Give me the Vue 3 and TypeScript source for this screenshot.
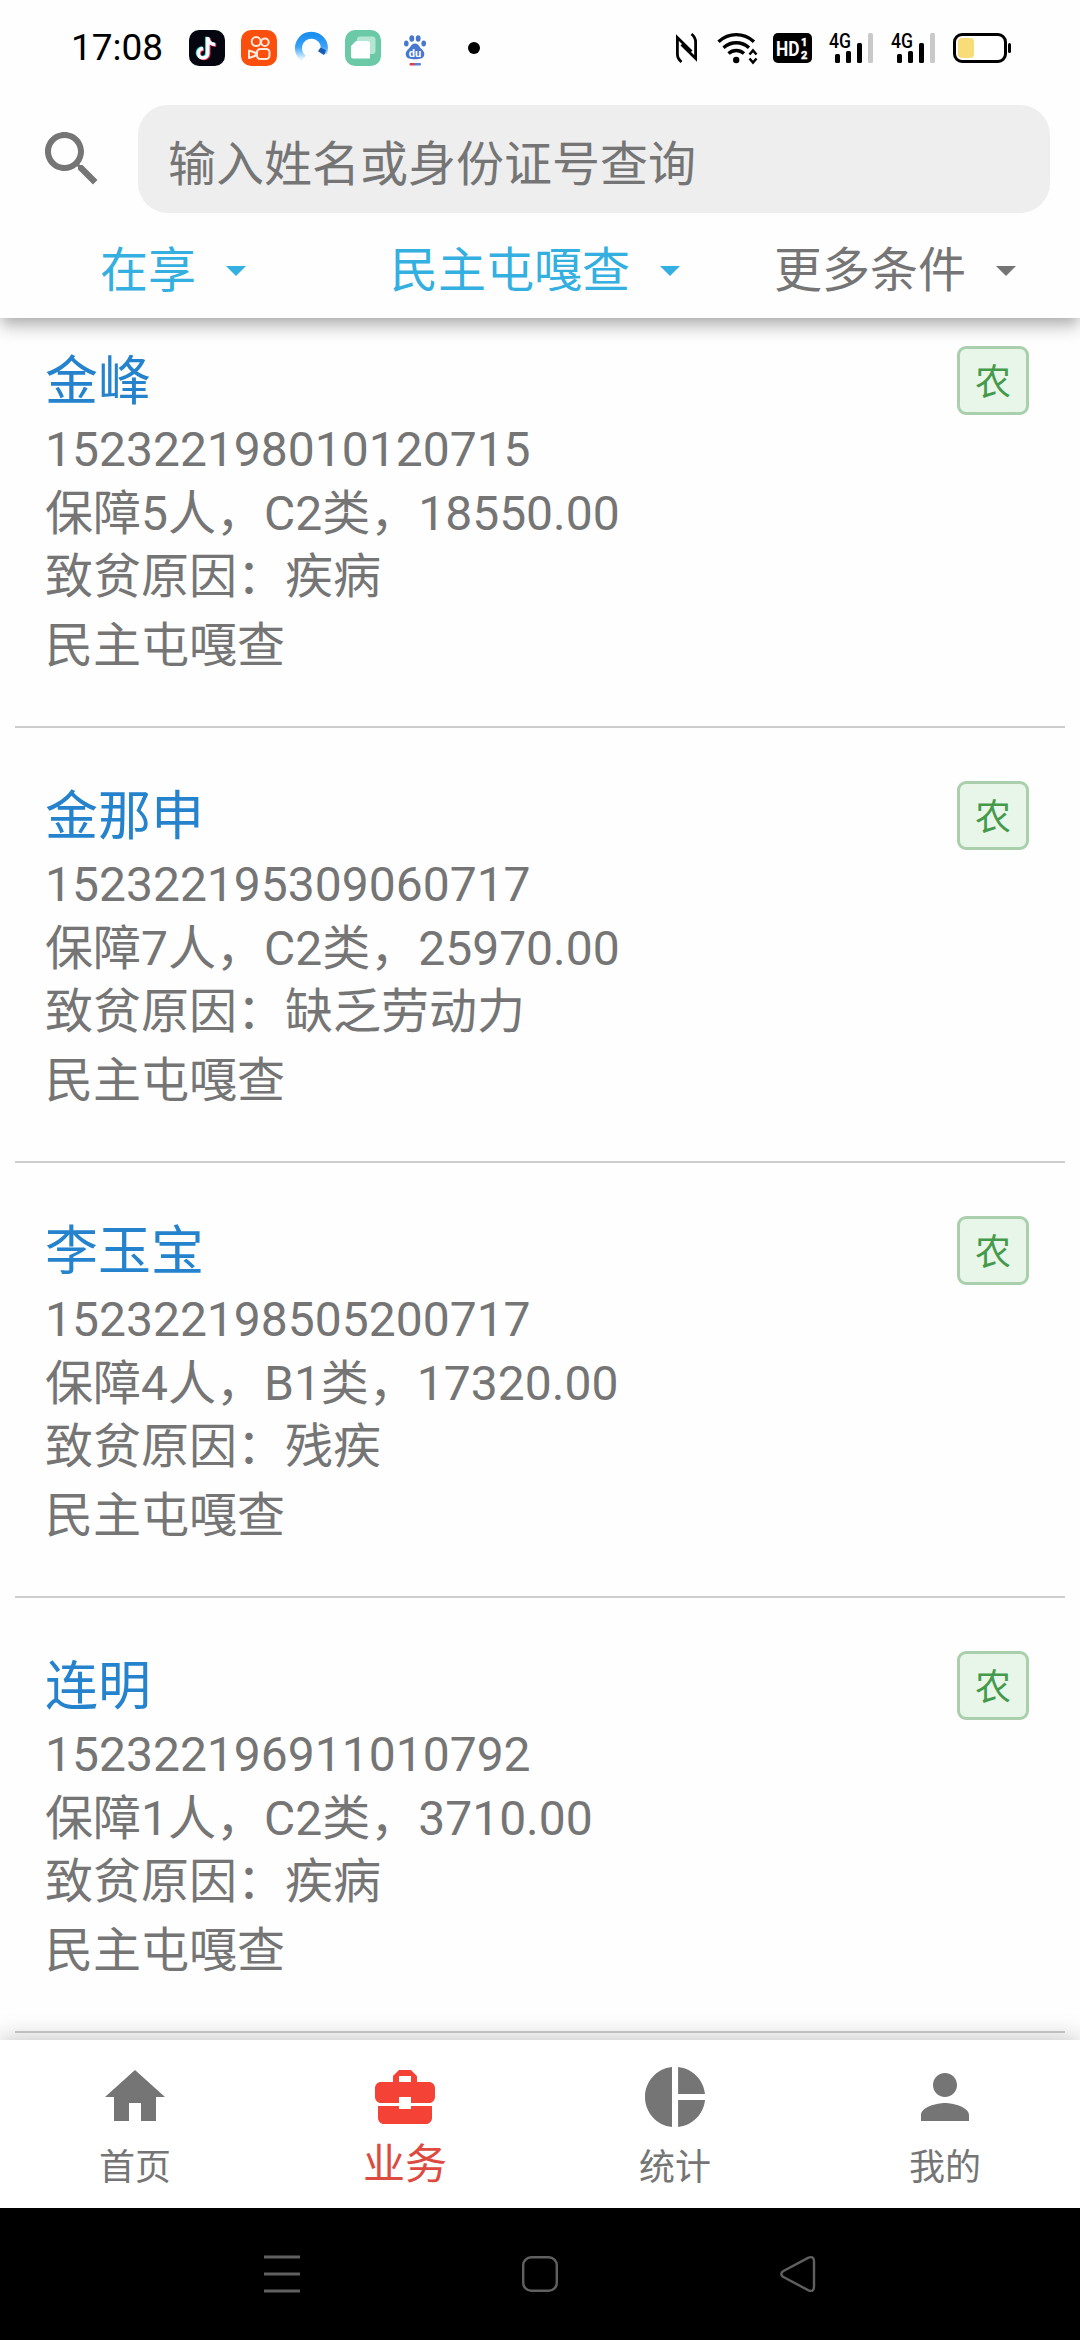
<script setup lang="ts">
import { ref } from 'vue'

interface Household {
  name: string
  idNumber: string
  people: number
  level: string
  amount: string
  reason: string
  village: string
  tag: string
}

interface Filter {
  key: string
  label: string
  active: boolean
}

interface Tab {
  key: string
  label: string
  path: string
}

const households: Household[] = [
  { name: '金峰', idNumber: '152322198010120715', people: 5, level: 'C2', amount: '18550.00', reason: '疾病', village: '民主屯嘎查', tag: '农' },
  { name: '金那申', idNumber: '152322195309060717', people: 7, level: 'C2', amount: '25970.00', reason: '缺乏劳动力', village: '民主屯嘎查', tag: '农' },
  { name: '李玉宝', idNumber: '152322198505200717', people: 4, level: 'B1', amount: '17320.00', reason: '残疾', village: '民主屯嘎查', tag: '农' },
  { name: '连明', idNumber: '152322196911010792', people: 1, level: 'C2', amount: '3710.00', reason: '疾病', village: '民主屯嘎查', tag: '农' },
]

const filters: Filter[] = [
  { key: 'state', label: '在享', active: true },
  { key: 'village', label: '民主屯嘎查', active: true },
  { key: 'more', label: '更多条件', active: false },
]

const tabs: Tab[] = [
  { key: 'home', label: '首页', path: 'M10 20v-6h4v6h5v-8h3L12 3 2 12h3v8z' },
  {
    key: 'work',
    label: '业务',
    path: 'M10 16v-1H3.01L3 19c0 1.11.89 2 2 2h14c1.11 0 2-.89 2-2v-4h-7v1h-4zm10-9h-4.01V5l-2-2h-4l-2 2v2H4c-1.1 0-2 .9-2 2v3c0 1.11.89 2 2 2h6v-2h4v2h6c1.1 0 2-.9 2-2V9c0-1.1-.9-2-2-2zm-6 0h-4V5h4v2z',
  },
  {
    key: 'stats',
    label: '统计',
    path: 'M11 2v20c-5.07-.5-9-4.79-9-10s3.93-9.5 9-10zm2.03 0v8.99H22c-.47-4.74-4.24-8.52-8.97-8.99zm0 11.01V22c4.74-.47 8.5-4.25 8.97-8.99h-8.97z',
  },
  {
    key: 'mine',
    label: '我的',
    path: 'M12 12c2.21 0 4-1.79 4-4s-1.79-4-4-4-4 1.79-4 4 1.79 4 4 4zm0 2c-2.67 0-8 1.34-8 4v2h16v-2c0-2.66-5.33-4-8-4z',
  },
]

const currentTab = ref('work')
const keyword = ref('')
</script>

<template>
  <div class="screen">
    <header class="top">
      <div class="status">
        <div class="status-left">
          <span class="clock">17:08</span>
          <svg class="app-icon" viewBox="0 0 36 36">
            <rect width="36" height="36" rx="10" fill="#05060f" />
            <g fill="none" stroke-width="3.4">
              <path d="M18.3 7v16.2a4.7 4.7 0 1 1-4.7-4.9M18.3 7.5c.6 4.2 3.4 6.6 7.4 6.8" stroke="#35e5e0" transform="translate(-.5 -.3)" />
              <path d="M18.3 7v16.2a4.7 4.7 0 1 1-4.7-4.9M18.3 7.5c.6 4.2 3.4 6.6 7.4 6.8" stroke="#f5315f" transform="translate(1.5 .9)" />
              <path d="M18.3 7v16.2a4.7 4.7 0 1 1-4.7-4.9M18.3 7.5c.6 4.2 3.4 6.6 7.4 6.8" stroke="#fff" transform="translate(.5 .2)" />
            </g>
          </svg>
          <svg class="app-icon" viewBox="0 0 36 36">
            <rect width="36" height="36" rx="10" fill="#fb4f0e" />
            <g fill="none" stroke="#ffeadd" stroke-width="2">
              <circle cx="15.2" cy="11.6" r="4.5" />
              <circle cx="23.9" cy="12.2" r="3.8" />
              <rect x="16" y="19" width="12.5" height="10" rx="3.2" />
              <path d="M8 20.5v7.5l6.5-2.3v-3z" stroke-linejoin="round" />
            </g>
          </svg>
          <svg class="app-icon" viewBox="0 0 36 36">
            <defs>
              <linearGradient id="ring" x1="0" y1="0" x2="0" y2="1">
                <stop offset="0" stop-color="#1a8ff0" />
                <stop offset=".5" stop-color="#3aa3f5" />
                <stop offset="1" stop-color="#e4f3fe" />
              </linearGradient>
            </defs>
            <path d="M10.5 28.5A13 13 0 1 1 30.5 23" fill="none" stroke="url(#ring)" stroke-width="7" />
            <path d="M27.5 17.5l5.3 2.5c-.2 2-.8 3.6-1.9 5.1l-5.9-3.9z" fill="#175bb5" />
          </svg>
          <svg class="app-icon" viewBox="0 0 36 36">
            <rect width="36" height="36" rx="10" fill="#6cc9a8" />
            <rect x="12" y="6.5" width="18.5" height="17.5" rx="3" fill="#b4e6d4" />
            <path d="M11 11h11a3 3 0 0 1 3 3v14.5H8.5A2.5 2.5 0 0 1 6 26V16z" fill="#fff" />
          </svg>
          <svg class="app-icon" viewBox="0 0 36 36">
            <g fill="#4777cf">
              <ellipse cx="9.3" cy="13.5" rx="2.3" ry="3" />
              <ellipse cx="14.8" cy="8.5" rx="2.4" ry="3.3" />
              <ellipse cx="21.2" cy="8.5" rx="2.4" ry="3.3" />
              <ellipse cx="26.7" cy="13.5" rx="2.3" ry="3" />
              <path d="M18 13.5c-3.5 0-4.3 3.5-6.3 5.3-2.6 2.3-3.6 4.4-2.7 7 1 3 4.5 3.4 9 3.4s8-.4 9-3.4c.9-2.6-.1-4.7-2.7-7-2-1.8-2.8-5.3-6.3-5.3z" />
            </g>
            <text x="18" y="27" class="du" text-anchor="middle">du</text>
            <rect x="12.5" y="33" width="6" height="2.5" rx="1" fill="#dc3f4c" />
            <rect x="17.5" y="33" width="6.5" height="2.5" rx="1" fill="#5b83d8" />
          </svg>
          <span class="more-dot"></span>
        </div>
        <div class="status-right">
          <svg width="21" height="30" viewBox="0 0 21 30" fill="none" stroke="#000" stroke-width="2.8">
            <path d="M5.5 29C2.5 26.5 1.4 24 1.4 21V4.5L15.5 18.5M15.5 1C18.5 3.5 19.6 6 19.6 9V25.5L5.5 11.5" />
          </svg>
          <svg class="wifi" width="42" height="32" viewBox="0 0 42 32">
            <g fill="none" stroke="#000" stroke-width="3.4">
              <path d="M1.5 9.7C12 .3 26.5.3 37 9.7" />
              <path d="M6.5 15.7C14 9 24.5 9 32 15.7" />
              <path d="M11.5 21.5c4.5-4 11-4 15.5 0" />
            </g>
            <circle cx="19.2" cy="28" r="3.2" />
            <path d="M32.5 22.5l3.5-4 3.5 4M32.5 26.5l3.5 4 3.5-4" fill="none" stroke="#000" stroke-width="2.5" />
          </svg>
          <svg class="hd" width="39" height="30" viewBox="0 0 39 30">
            <rect width="39" height="30" rx="5" />
            <g fill="#fff" class="hd-text">
              <text x="3" y="22.5" font-size="21" textLength="23.5" lengthAdjust="spacingAndGlyphs">HD</text>
              <text x="28" y="12.5" font-size="11" stroke="#fff" stroke-width=".5">1</text>
              <text x="28" y="25.7" font-size="11" stroke="#fff" stroke-width=".5">2</text>
            </g>
          </svg>
          <svg v-for="n in 2" :key="n" class="signal" width="46" height="30" viewBox="0 0 46 30">
            <text x="0" y="14.5" class="net" textLength="22" lengthAdjust="spacingAndGlyphs">4G</text>
            <rect x="6" y="21" width="5" height="9" rx="1.5" />
            <rect x="17" y="18" width="5" height="12" rx="1.5" />
            <rect x="28" y="10" width="5" height="20" rx="1.5" />
            <rect x="39" y="0" width="5" height="30" rx="1.5" fill="#c9c9c9" />
          </svg>
          <svg class="battery" width="58" height="30" viewBox="0 0 58 30">
            <rect x="1.5" y="1.5" width="51" height="27" rx="7.5" fill="#fff" stroke="#000" stroke-width="3" />
            <rect x="5" y="5" width="16" height="20" rx="4" fill="#f8dc77" />
            <rect x="55" y="10" width="3" height="10" rx="1.5" />
          </svg>
        </div>
      </div>

      <div class="search">
        <svg class="search-icon" viewBox="0 0 24 24">
          <path d="M15.5 14h-.79l-.28-.27C15.41 12.59 16 11.11 16 9.5 16 5.91 13.09 3 9.5 3S3 5.91 3 9.5 5.91 16 9.5 16c1.61 0 3.09-.59 4.23-1.57l.27.28v.79l5 4.99L20.49 19l-4.99-5zm-6 0C7.01 14 5 11.99 5 9.5S7.01 5 9.5 5 14 7.01 14 9.5 11.99 14 9.5 14z" />
        </svg>
        <input v-model="keyword" class="search-input" type="text" placeholder="输入姓名或身份证号查询" />
      </div>

      <div class="filters">
        <div v-for="f in filters" :key="f.key" class="filter" :class="[`filter-${f.key}`, { active: f.active }]">
          <span>{{ f.label }}</span>
          <svg class="caret" viewBox="0 0 20 10"><path d="M0 0h20L10 10z" /></svg>
        </div>
      </div>
    </header>

    <main class="list">
      <article v-for="h in households" :key="h.idNumber" class="item">
        <div class="info">
          <div class="name">{{ h.name }}</div>
          <div class="line">{{ h.idNumber }}</div>
          <div class="line">保障{{ h.people }}人，{{ h.level }}类，{{ h.amount }}</div>
          <div class="line">致贫原因：{{ h.reason }}</div>
          <div class="line village-line">{{ h.village }}</div>
        </div>
        <span class="tag">{{ h.tag }}</span>
      </article>
    </main>

    <nav class="tabs">
      <div v-for="t in tabs" :key="t.key" class="tab" :class="{ selected: t.key === currentTab }" @click="currentTab = t.key">
        <svg viewBox="0 0 24 24"><path :d="t.path" /></svg>
        <span>{{ t.label }}</span>
      </div>
    </nav>

    <div class="system-nav">
      <svg width="36" height="38" viewBox="0 0 36 38" fill="none">
        <path d="M0 2h36M0 19h36M0 36h36" stroke-width="3" />
      </svg>
      <svg width="38" height="38" viewBox="0 0 38 38" fill="none">
        <rect x="2.2" y="2.2" width="33.6" height="33.6" rx="8" stroke-width="2.4" />
      </svg>
      <svg width="36" height="38" viewBox="0 0 36 38" fill="none">
        <path d="M3 16.3L28.5 2.6Q33.8 .8 34 6V32Q33.8 37.2 28.5 35.4L3 21.7Q-.5 19 3 16.3z" stroke-width="2.4" />
      </svg>
    </div>
  </div>
</template>

<style>
body {
  margin: 0;
  background: #fefefe;
}
</style>

<style scoped>
.screen {
  width: 1080px;
  height: 2340px;
  display: flex;
  flex-direction: column;
  overflow: hidden;
  background: #fefefe;
  color: #757575;
  font-family: Roboto, "Noto Sans CJK SC", sans-serif;
  font-size: 48px;
}

.top {
  position: relative;
  z-index: 2;
  height: 318px;
  flex: none;
  background: #fefefe;
  box-shadow: 0 6px 12px -3px rgba(0, 0, 0, 0.2), 0 12px 15px 0 rgba(0, 0, 0, 0.12), 0 3px 24px 0 rgba(0, 0, 0, 0.08);
}

.status {
  height: 96px;
  display: flex;
  justify-content: space-between;
  padding: 0 69px 9px 71px;
  box-sizing: border-box;
  color: #000;
}

.status svg {
  overflow: visible;
}

.status-left,
.status-right {
  display: flex;
  align-items: center;
  padding-top: 9px;
}

.clock {
  width: 118px;
  font-size: 37px;
  line-height: 36px;
}

.app-icon {
  width: 36px;
  height: 36px;
  margin-right: 16px;
}

.du {
  font: 700 11px Roboto, sans-serif;
  fill: #fff;
}

.more-dot {
  width: 12px;
  height: 12px;
  margin-left: 19px;
  border-radius: 50%;
  background: #000;
}

.wifi {
  margin-left: 20px;
}

.hd {
  margin-left: 14px;
}

.hd-text {
  font-family: Roboto, sans-serif;
  font-weight: 700;
}

.signal {
  margin-left: 17px;
}

.signal + .signal {
  margin-left: 16px;
}

.net {
  font: 500 20px Roboto, sans-serif;
}

.battery {
  margin-left: 16px;
}

.search {
  display: flex;
  align-items: center;
  height: 108px;
  margin: 9px 30px 0 36px;
}

.search-icon {
  width: 72px;
  height: 72px;
  margin-right: 30px;
  fill: #757575;
}

.search-input {
  flex: 1;
  min-width: 0;
  height: 108px;
  box-sizing: border-box;
  padding: 10px 30px 0;
  border: 0;
  outline: 0;
  border-radius: 30px;
  background: #eee;
  font: inherit;
  color: #757575;
}

.search-input::placeholder {
  color: #757575;
  opacity: 1;
}

.filters {
  display: flex;
  height: 105px;
  padding-left: 100px;
}

.filter {
  display: flex;
  flex: none;
  align-items: center;
  height: 105px;
  white-space: nowrap;
  color: #757575;
  fill: currentColor;
}

.filter.active {
  color: #33afe0;
}

.filter-village {
  margin-left: 144px;
}

.filter-more {
  margin-left: 94px;
}

.caret {
  flex: none;
  width: 20px;
  height: 10px;
  margin: 11px 0 0 30px;
}

.list {
  flex: 1;
  min-height: 0;
  overflow: hidden;
}

.item {
  display: flex;
  justify-content: space-between;
  align-items: flex-start;
  height: 435px;
  box-sizing: border-box;
  margin: 0 15px;
  padding: 53px 36px 0 30px;
  border-bottom: 2px solid #cdcdcd;
}

.item:first-child {
  margin-top: -25px;
}

.name {
  padding-top: 1px;
  color: #2583cd;
  font-size: 53px;
  line-height: 71px;
}

.line {
  line-height: 63.5px;
}

.village-line {
  margin-top: 5px;
}

.tag {
  width: 72px;
  height: 69px;
  box-sizing: border-box;
  border: 3px solid #a9cfad;
  border-radius: 9px;
  background: #e8f5e9;
  color: #449a4a;
  font-size: 36px;
  line-height: 68px;
  text-align: center;
}

.tabs {
  position: relative;
  z-index: 2;
  flex: none;
  display: flex;
  height: 168px;
  background: #fff;
  box-shadow: 0 0 24px rgba(0, 0, 0, 0.26);
}

.tab {
  flex: 1;
  display: flex;
  flex-direction: column;
  align-items: center;
  padding-top: 21px;
  font-size: 36px;
  fill: #757575;
}

.tab svg {
  width: 72px;
  height: 72px;
}

.tab span {
  line-height: 36px;
  margin-top: 17px;
}

.tab.selected {
  color: #dd4a40;
  font-size: 42px;
  fill: #f44336;
}

.tab.selected span {
  margin-top: 14px;
}

.system-nav {
  position: relative;
  z-index: 3;
  flex: none;
  display: flex;
  justify-content: space-between;
  height: 132px;
  padding: 47px 264px 0;
  box-sizing: border-box;
  background: #000;
  stroke: #606060;
}
</style>
